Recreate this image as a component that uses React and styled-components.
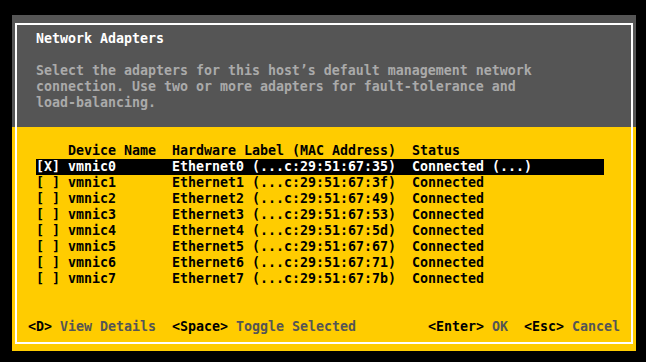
import React from "react"
import styled, { createGlobalStyle } from "styled-components"

const GlobalStyle = createGlobalStyle`
    html, body {
        margin: 0;
        padding: 0;
        background: #000;
    }
`

const Screen = styled.div`
    width: 646px;
    height: 362px;
    background: #000;
    padding: 15px 10px 11px 12px;
    box-sizing: border-box;
    font-family: "DejaVu Sans Mono", "Liberation Mono", monospace;
    font-weight: bold;
    font-size: 13.29px;
    line-height: 16px;
    white-space: pre;
`

const Dialog = styled.div`
    position: relative;
    width: 624px;
    height: 336px;
    display: flex;
    flex-direction: column;
`

const Frame = styled.div`
    position: absolute;
    top: 8px;
    left: 3px;
    right: 3px;
    bottom: 7px;
    border: 2px solid #fff;
    pointer-events: none;
`

const Header = styled.div`
    height: 112px;
    background: #555555;
    padding: 16px 0 0 24px;
    box-sizing: border-box;
`

const Title = styled.div`
    color: #fff;
    height: 32px;
`

const Description = styled.div`
    color: #aaaaaa;
`

const Body = styled.div`
    flex: 1;
    background: #ffcc00;
    padding: 16px 0 0 0;
    display: flex;
    flex-direction: column;
`

const Table = styled.div`
    padding-left: 24px;
`

const Row = styled.div`
    display: grid;
    grid-template-columns: 32px 104px 240px 1fr;
    width: 568px;
    height: 16px;
    color: ${props => (props.$selected ? "#fff" : "#000")};
    background: ${props => (props.$selected ? "#000" : "transparent")};
`

const Footer = styled.div`
    margin-top: 32px;
    padding-left: 16px;
    display: grid;
    grid-template-columns: 144px 256px 96px 1fr;
    height: 16px;
`

const Key = styled.span`
    color: #000;
`

const Label = styled.span`
    color: #555555;
`

const adapters = [
    { name: "vmnic0", mac: "35", status: "Connected (...)", selected: true },
    { name: "vmnic1", mac: "3f", status: "Connected" },
    { name: "vmnic2", mac: "49", status: "Connected" },
    { name: "vmnic3", mac: "53", status: "Connected" },
    { name: "vmnic4", mac: "5d", status: "Connected" },
    { name: "vmnic5", mac: "67", status: "Connected" },
    { name: "vmnic6", mac: "71", status: "Connected" },
    { name: "vmnic7", mac: "7b", status: "Connected" },
]

const actions = [
    { key: "<D>", label: "View Details" },
    { key: "<Space>", label: "Toggle Selected" },
    { key: "<Enter>", label: "OK" },
    { key: "<Esc>", label: "Cancel" },
]

const App = () => {
    return (
        <Screen>
            <GlobalStyle />
            <Dialog>
                <Header>
                    <Title>Network Adapters</Title>
                    <Description>
                        {"Select the adapters for this host\u2019s default management network\nconnection. Use two or more adapters for fault-tolerance and\nload-balancing."}
                    </Description>
                </Header>
                <Body>
                    <Table>
                        <Row>
                            <span></span>
                            <span>Device Name</span>
                            <span>Hardware Label (MAC Address)</span>
                            <span>Status</span>
                        </Row>
                        {adapters.map((a, i) => (
                            <Row key={a.name} $selected={a.selected}>
                                <span>{a.selected ? "[X]" : "[ ]"}</span>
                                <span>{a.name}</span>
                                <span>{`Ethernet${i} (...c:29:51:67:${a.mac})`}</span>
                                <span>{a.status}</span>
                            </Row>
                        ))}
                    </Table>
                    <Footer>
                        {actions.map(a => (
                            <span key={a.key}>
                                <Key>{a.key}</Key> <Label>{a.label}</Label>
                            </span>
                        ))}
                    </Footer>
                </Body>
                <Frame />
            </Dialog>
        </Screen>
    )
}

export default App
